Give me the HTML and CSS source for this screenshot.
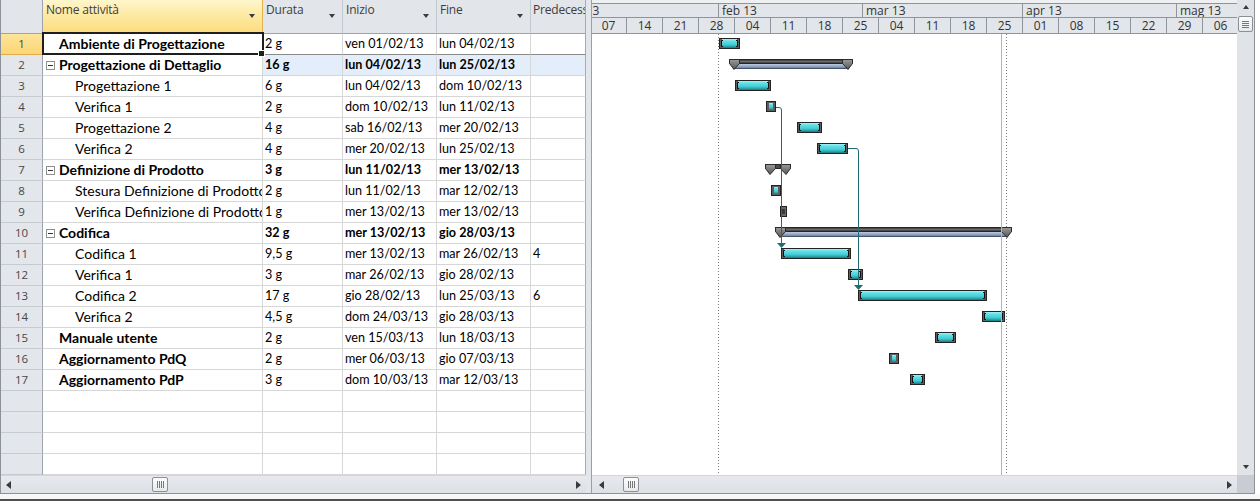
FILE: index.html
```html
<!DOCTYPE html>
<html lang="it">
<head>
<meta charset="utf-8">
<title>Gantt</title>
<link rel="stylesheet" href="styles.css">
</head>
<body>
<div class="app">
  <div class="main">
    <div class="sheet">
      <div class="thead">
        <div class="th corner-h"></div>
        <div class="th sel">Nome attività<i class="dd"></i></div>
        <div class="th">Durata<i class="dd"></i></div>
        <div class="th">Inizio<i class="dd"></i></div>
        <div class="th">Fine<i class="dd"></i></div>
        <div class="th last">Predecessori</div>
      </div>
      <div class="tbody">
        <div class="row cur"><div class="rn">1</div><div class="cell name l1 b selbox">Ambiente di Progettazione</div><div class="cell">2 g</div><div class="cell">ven 01/02/13</div><div class="cell">lun 04/02/13</div><div class="cell last"></div></div>
        <div class="row sum hl"><div class="rn">2</div><div class="cell name l0"><i class="tog"></i>Progettazione di Dettaglio</div><div class="cell">16 g</div><div class="cell">lun 04/02/13</div><div class="cell">lun 25/02/13</div><div class="cell last"></div></div>
        <div class="row"><div class="rn">3</div><div class="cell name l2">Progettazione 1</div><div class="cell">6 g</div><div class="cell">lun 04/02/13</div><div class="cell">dom 10/02/13</div><div class="cell last"></div></div>
        <div class="row"><div class="rn">4</div><div class="cell name l2">Verifica 1</div><div class="cell">2 g</div><div class="cell">dom 10/02/13</div><div class="cell">lun 11/02/13</div><div class="cell last"></div></div>
        <div class="row"><div class="rn">5</div><div class="cell name l2">Progettazione 2</div><div class="cell">4 g</div><div class="cell">sab 16/02/13</div><div class="cell">mer 20/02/13</div><div class="cell last"></div></div>
        <div class="row"><div class="rn">6</div><div class="cell name l2">Verifica 2</div><div class="cell">4 g</div><div class="cell">mer 20/02/13</div><div class="cell">lun 25/02/13</div><div class="cell last"></div></div>
        <div class="row sum"><div class="rn">7</div><div class="cell name l0"><i class="tog"></i>Definizione di Prodotto</div><div class="cell">3 g</div><div class="cell">lun 11/02/13</div><div class="cell">mer 13/02/13</div><div class="cell last"></div></div>
        <div class="row"><div class="rn">8</div><div class="cell name l2">Stesura Definizione di Prodotto</div><div class="cell">2 g</div><div class="cell">lun 11/02/13</div><div class="cell">mar 12/02/13</div><div class="cell last"></div></div>
        <div class="row"><div class="rn">9</div><div class="cell name l2">Verifica Definizione di Prodotto</div><div class="cell">1 g</div><div class="cell">mer 13/02/13</div><div class="cell">mer 13/02/13</div><div class="cell last"></div></div>
        <div class="row sum"><div class="rn">10</div><div class="cell name l0"><i class="tog"></i>Codifica</div><div class="cell">32 g</div><div class="cell">mer 13/02/13</div><div class="cell">gio 28/03/13</div><div class="cell last"></div></div>
        <div class="row"><div class="rn">11</div><div class="cell name l2">Codifica 1</div><div class="cell">9,5 g</div><div class="cell">mer 13/02/13</div><div class="cell">mar 26/02/13</div><div class="cell last">4</div></div>
        <div class="row"><div class="rn">12</div><div class="cell name l2">Verifica 1</div><div class="cell">3 g</div><div class="cell">mar 26/02/13</div><div class="cell">gio 28/02/13</div><div class="cell last"></div></div>
        <div class="row"><div class="rn">13</div><div class="cell name l2">Codifica 2</div><div class="cell">17 g</div><div class="cell">gio 28/02/13</div><div class="cell">lun 25/03/13</div><div class="cell last">6</div></div>
        <div class="row"><div class="rn">14</div><div class="cell name l2">Verifica 2</div><div class="cell">4,5 g</div><div class="cell">dom 24/03/13</div><div class="cell">gio 28/03/13</div><div class="cell last"></div></div>
        <div class="row"><div class="rn">15</div><div class="cell name l1 b">Manuale utente</div><div class="cell">2 g</div><div class="cell">ven 15/03/13</div><div class="cell">lun 18/03/13</div><div class="cell last"></div></div>
        <div class="row"><div class="rn">16</div><div class="cell name l1 b">Aggiornamento PdQ</div><div class="cell">2 g</div><div class="cell">mer 06/03/13</div><div class="cell">gio 07/03/13</div><div class="cell last"></div></div>
        <div class="row"><div class="rn">17</div><div class="cell name l1 b">Aggiornamento PdP</div><div class="cell">3 g</div><div class="cell">dom 10/03/13</div><div class="cell">mar 12/03/13</div><div class="cell last"></div></div>
        <div class="row"><div class="rn"></div><div class="cell"></div><div class="cell"></div><div class="cell"></div><div class="cell"></div><div class="cell last"></div></div>
        <div class="row"><div class="rn"></div><div class="cell"></div><div class="cell"></div><div class="cell"></div><div class="cell"></div><div class="cell last"></div></div>
        <div class="row"><div class="rn"></div><div class="cell"></div><div class="cell"></div><div class="cell"></div><div class="cell"></div><div class="cell last"></div></div>
        <div class="row"><div class="rn"></div><div class="cell"></div><div class="cell"></div><div class="cell"></div><div class="cell"></div><div class="cell last"></div></div>
      </div>
    </div>
    <div class="splitter"></div>
    <div class="gantt">
      <div class="tscale">
        <div class="tier t1">
          <div class="m m-gen">gen 13</div>
          <div class="m m-feb">feb 13</div>
          <div class="m m-mar">mar 13</div>
          <div class="m m-apr">apr 13</div>
          <div class="m m-mag">mag 13</div>
        </div>
        <div class="tier t2">
          <div class="w first">07</div><div class="w">14</div><div class="w">21</div><div class="w">28</div><div class="w">04</div><div class="w">11</div><div class="w">18</div><div class="w">25</div><div class="w">04</div><div class="w">11</div><div class="w">18</div><div class="w">25</div><div class="w">01</div><div class="w">08</div><div class="w">15</div><div class="w">22</div><div class="w">29</div><div class="w">06</div>
        </div>
      </div>
      <svg class="chart" width="645" height="441" viewBox="0 0 645 441">
        <defs>
          <linearGradient id="cy" x1="0" y1="0" x2="0" y2="1">
            <stop offset="0" stop-color="#a4f4f7"/>
            <stop offset="0.22" stop-color="#62e0e8"/>
            <stop offset="0.6" stop-color="#46cdd6"/>
            <stop offset="0.85" stop-color="#2a9fa7"/>
            <stop offset="1" stop-color="#1b767c"/>
          </linearGradient>
          <linearGradient id="bl" x1="0" y1="0" x2="0" y2="1">
            <stop offset="0" stop-color="#cdd8ea"/>
            <stop offset="0.45" stop-color="#9fb1cc"/>
            <stop offset="1" stop-color="#60738f"/>
          </linearGradient>
          <linearGradient id="tri" x1="0" y1="0" x2="0" y2="1">
            <stop offset="0" stop-color="#9a9a9a"/>
            <stop offset="1" stop-color="#555"/>
          </linearGradient>
        </defs>

        <line x1="126.5" y1="0" x2="126.5" y2="441" stroke="#7d7d7d" stroke-dasharray="1 2"/>
        <line x1="414.5" y1="0" x2="414.5" y2="441" stroke="#7d7d7d" stroke-dasharray="1 2"/>

        <!-- summary 2 -->
        <g transform="translate(137 25)">
          <rect x="4" y="4" width="116" height="6" fill="url(#bl)"/>
          <rect x="4" y="9" width="116" height="1" fill="#43536c"/>
          <rect width="124" height="5" fill="#262626"/>
          <rect x="1" y="1" width="122" height="3" fill="#4a4a4a"/>
          <rect x="1" y="2" width="122" height="1" fill="#6c6c6c"/>
          <path d="M0.5 0.5H10.5V4.5L5 10.5L0.5 4.5Z" fill="url(#tri)" stroke="#2b2b2b"/>
          <path d="M113.5 0.5H123.5V4.5L119 10.5L113.5 4.5Z" fill="url(#tri)" stroke="#2b2b2b"/>
        </g>
        <!-- summary 7 -->
        <g transform="translate(173 130)">
          <rect width="26" height="5" fill="#262626"/>
          <rect x="1" y="1" width="24" height="3" fill="#4a4a4a"/>
          <path d="M0.5 0.5H10.5V4.5L5 10.5L0.5 4.5Z" fill="url(#tri)" stroke="#2b2b2b"/>
          <path d="M15.5 0.5H25.5V4.5L21 10.5L15.5 4.5Z" fill="url(#tri)" stroke="#2b2b2b"/>
        </g>
        <!-- summary 10 -->
        <g transform="translate(183 193)">
          <rect x="4" y="4" width="229" height="6" fill="url(#bl)"/>
          <rect x="4" y="9" width="229" height="1" fill="#43536c"/>
          <rect width="237" height="5" fill="#262626"/>
          <rect x="1" y="1" width="235" height="3" fill="#4a4a4a"/>
          <rect x="1" y="2" width="235" height="1" fill="#6c6c6c"/>
          <path d="M0.5 0.5H10.5V4.5L5 10.5L0.5 4.5Z" fill="url(#tri)" stroke="#2b2b2b"/>
          <path d="M226.5 0.5H236.5V4.5L232 10.5L226.5 4.5Z" fill="url(#tri)" stroke="#2b2b2b"/>
        </g>

        <g class="tasks">
          <g transform="translate(127 4)"><rect width="21" height="11" fill="#222"/><rect x="1" y="1" width="19" height="9" fill="#5e5e5e"/><rect x="3" y="1" width="15" height="9" fill="url(#cy)"/><path d="M4 2.5H2.5v6H4M17 2.5h1.5v6h-1.5" stroke="#111" fill="none"/></g>
          <g transform="translate(143 46)"><rect width="36" height="11" fill="#222"/><rect x="1" y="1" width="34" height="9" fill="#5e5e5e"/><rect x="3" y="1" width="30" height="9" fill="url(#cy)"/><path d="M4 2.5H2.5v6H4M32 2.5h1.5v6h-1.5" stroke="#111" fill="none"/></g>
          <g transform="translate(174 67)"><rect width="10" height="11" fill="#222"/><rect x="1" y="1" width="8" height="9" fill="#5e5e5e"/><rect x="3" y="2" width="4" height="7" fill="url(#cy)"/></g>
          <g transform="translate(205 88)"><rect width="25" height="11" fill="#222"/><rect x="1" y="1" width="23" height="9" fill="#5e5e5e"/><rect x="3" y="1" width="19" height="9" fill="url(#cy)"/><path d="M4 2.5H2.5v6H4M21 2.5h1.5v6h-1.5" stroke="#111" fill="none"/></g>
          <g transform="translate(225 109)"><rect width="31" height="11" fill="#222"/><rect x="1" y="1" width="29" height="9" fill="#5e5e5e"/><rect x="3" y="1" width="25" height="9" fill="url(#cy)"/><path d="M4 2.5H2.5v6H4M27 2.5h1.5v6h-1.5" stroke="#111" fill="none"/></g>
          <g transform="translate(179 151)"><rect width="10" height="11" fill="#222"/><rect x="1" y="1" width="8" height="9" fill="#5e5e5e"/><rect x="3" y="2" width="4" height="7" fill="url(#cy)"/></g>
          <g transform="translate(188 172)"><rect width="7" height="11" fill="#222"/><rect x="1" y="1" width="5" height="9" fill="#6a6a6a"/><rect x="2" y="3" width="3" height="5" fill="#3a3a3a"/></g>
          <g transform="translate(189 214)"><rect width="70" height="11" fill="#222"/><rect x="1" y="1" width="68" height="9" fill="#5e5e5e"/><rect x="3" y="1" width="64" height="9" fill="url(#cy)"/><path d="M4 2.5H2.5v6H4M66 2.5h1.5v6h-1.5" stroke="#111" fill="none"/></g>
          <g transform="translate(256 235)"><rect width="15" height="11" fill="#222"/><rect x="1" y="1" width="13" height="9" fill="#5e5e5e"/><rect x="3" y="1" width="9" height="9" fill="url(#cy)"/><path d="M4 2.5H2.5v6H4M11 2.5h1.5v6h-1.5" stroke="#111" fill="none"/></g>
          <g transform="translate(266 256)"><rect width="129" height="11" fill="#222"/><rect x="1" y="1" width="127" height="9" fill="#5e5e5e"/><rect x="3" y="1" width="123" height="9" fill="url(#cy)"/><path d="M4 2.5H2.5v6H4M125 2.5h1.5v6h-1.5" stroke="#111" fill="none"/></g>
          <g transform="translate(390 277)"><rect width="23" height="11" fill="#222"/><rect x="1" y="1" width="21" height="9" fill="#5e5e5e"/><rect x="3" y="1" width="17" height="9" fill="url(#cy)"/><path d="M4 2.5H2.5v6H4M19 2.5h1.5v6h-1.5" stroke="#111" fill="none"/></g>
          <g transform="translate(343 298)"><rect width="21" height="11" fill="#222"/><rect x="1" y="1" width="19" height="9" fill="#5e5e5e"/><rect x="3" y="1" width="15" height="9" fill="url(#cy)"/><path d="M4 2.5H2.5v6H4M17 2.5h1.5v6h-1.5" stroke="#111" fill="none"/></g>
          <g transform="translate(297 319)"><rect width="10" height="11" fill="#222"/><rect x="1" y="1" width="8" height="9" fill="#5e5e5e"/><rect x="3" y="2" width="4" height="7" fill="url(#cy)"/></g>
          <g transform="translate(318 340)"><rect width="15" height="11" fill="#222"/><rect x="1" y="1" width="13" height="9" fill="#5e5e5e"/><rect x="3" y="1" width="9" height="9" fill="url(#cy)"/><path d="M4 2.5H2.5v6H4M11 2.5h1.5v6h-1.5" stroke="#111" fill="none"/></g>
        </g>

        <g class="links" stroke="#1f6d73" fill="none">
          <path d="M184 73.5H187Q189.5 73.5 189.5 76V209"/>
          <path d="M256 114.5H264Q266.5 114.5 266.5 117V251"/>
        </g>
        <polygon points="185,209 194,209 189.5,214" fill="#1f6d73"/>
        <polygon points="262,251 271,251 266.5,256" fill="#1f6d73"/>

        <line x1="409.5" y1="0" x2="409.5" y2="441" stroke="#f2a565"/>
      </svg>
    </div>
    <div class="vscroll">
      <i class="va up"></i>
      <span class="vthumb"><i class="grip-h"></i></span>
      <i class="va down"></i>
    </div>
  </div>
  <div class="hbar">
    <div class="hs hs-left"><i class="ha l"></i><span class="hthumb t-left"><i class="grip-v"></i></span><i class="ha r"></i></div>
    <div class="splitter"></div>
    <div class="hs hs-right"><i class="ha l"></i><span class="hthumb t-right"><i class="grip-v"></i></span><i class="ha r"></i></div>
    <div class="corner"></div>
  </div>
</div>
<div class="footer"></div>
</body>
</html>
```
FILE: styles.css
```css
html, body {
  margin: 0;
  padding: 0;
}
body {
  width: 1260px;
  height: 501px;
  overflow: hidden;
  background: #fff;
  font-family: "Open Sans", "Noto Sans", sans-serif;
}

.app {
  width: 1255px;
  height: 494px;
  box-sizing: border-box;
  border-left: 1px solid #8d9198;
  border-right: 1px solid #8d9198;
  border-bottom: 1px solid #8d9198;
  display: flex;
  flex-direction: column;
}

.main {
  display: flex;
  height: 475px;
}

/* ---------- sheet ---------- */
.sheet {
  width: 585px;
  display: flex;
  flex-direction: column;
}
.thead,
.row {
  display: grid;
  grid-template-columns: 42px 220px 80px 94px 94px 55px;
}
.thead {
  height: 34px;
}
.th {
  position: relative;
  box-sizing: border-box;
  background: #e2e5e9;
  border-right: 1px solid #c3c8ce;
  border-bottom: 1px solid #9ea4ac;
  padding: 2px 3px;
  font-size: 12px;
  letter-spacing: -0.2px;
  line-height: 15px;
  color: #3d3d3d;
  white-space: nowrap;
  overflow: hidden;
}
.th.corner-h {
  border-right-color: #9ea4ac;
}
.th.sel {
  background: linear-gradient(#fef6cc 0%, #fdeaa4 45%, #fcdc7c 100%);
  border-right: 1px solid #e9b04e;
  border-bottom: 1px solid #e9b04e;
}
.th.last {
  border-right-color: #a6abb2;
  padding-left: 2px;
}
.dd {
  position: absolute;
  right: 7px;
  top: 14px;
  width: 0;
  height: 0;
  border-left: 3.5px solid transparent;
  border-right: 3.5px solid transparent;
  border-top: 4px solid #3c3c3c;
}

.row {
  height: 21px;
}
.rn {
  box-sizing: border-box;
  background: #e3e6ea;
  border-right: 1px solid #9ea4ac;
  border-bottom: 1px solid #c6cbd1;
  text-align: center;
  font-size: 11.5px;
  line-height: 20px;
  color: #474747;
}
.cell {
  position: relative;
  box-sizing: border-box;
  border-right: 1px solid #d7d7d7;
  border-bottom: 1px solid #d7d7d7;
  padding-left: 2px;
  font-family: Lato, "Open Sans", sans-serif;
  font-size: 12.6px;
  line-height: 20px;
  color: #000;
  white-space: nowrap;
  overflow: hidden;
}
.cell.name {
  font-size: 14px;
}
.cell.last {
  border-right-color: #a6abb2;
}
.cell.l0 { padding-left: 3px; }
.cell.l1 { padding-left: 16px; }
.cell.l2 { padding-left: 32px; }
.b,
.row.sum .cell {
  font-weight: 700;
}
.row.hl .cell:not(.name) {
  background: #e4eefa;
}
.row.cur .rn {
  background: linear-gradient(#fde49a, #fbd676);
  border-bottom-color: #e2ab4c;
  border-right-color: #e2ab4c;
}
.row.cur .cell {
  border-bottom-color: #8a8a8a;
}
.tog {
  display: inline-block;
  box-sizing: border-box;
  width: 9px;
  height: 9px;
  margin-right: 4px;
  vertical-align: 0;
  border: 1px solid #8f8f8f;
  background: #fff linear-gradient(#333, #333) center / 5px 1px no-repeat;
}
.cell.selbox {
  overflow: visible;
  z-index: 2;
}
.cell.selbox::after {
  content: "";
  position: absolute;
  left: -1px;
  top: -2px;
  width: 222px;
  height: 23px;
  box-sizing: border-box;
  border: 2px solid #1e1e1e;
}
.cell.selbox::before {
  content: "";
  position: absolute;
  left: 215px;
  top: 16px;
  width: 5px;
  height: 5px;
  background: #1e1e1e;
  border: 1px solid #fff;
  z-index: 3;
}

/* ---------- splitter ---------- */
.splitter {
  width: 6px;
  flex: none;
  box-sizing: border-box;
  background: #e3e6ea;
  border-right: 1px solid #9aa0a8;
}

/* ---------- gantt ---------- */
.gantt {
  width: 645px;
  display: flex;
  flex-direction: column;
  overflow: hidden;
}
.tscale {
  height: 34px;
  box-sizing: border-box;
  padding-top: 3px;
  background: #eef0f2;
  font-size: 12px;
  color: #333;
}
.tier {
  display: flex;
  background: #e2e5e9;
  overflow: hidden;
  white-space: nowrap;
}
.t1 {
  height: 15px;
  box-sizing: border-box;
  border-top: 1px solid #8e949b;
  border-bottom: 1px solid #8e949b;
  line-height: 13px;
}
.t2 {
  height: 16px;
  box-sizing: border-box;
  border-bottom: 1px solid #8e949b;
  line-height: 15px;
}
.m {
  flex: none;
  box-sizing: border-box;
  border-right: 1px solid #8e949b;
  padding-left: 3px;
}
.m-gen { width: 160px; margin-left: -33px; }
.m-feb { width: 144px; }
.m-mar { width: 160px; }
.m-apr { width: 154px; }
.m-mag { width: 160px; }
.w {
  flex: none;
  width: 36px;
  box-sizing: border-box;
  border-right: 1px solid #8e949b;
  text-align: center;
}
.w.first { margin-left: -1px; }
.chart {
  display: block;
  background: #fff;
}

/* ---------- scrollbars ---------- */
.vscroll {
  width: 17px;
  flex: none;
  display: flex;
  flex-direction: column;
  align-items: center;
  background: #e0e3e7;
}
.va {
  width: 0;
  height: 0;
  border-left: 3.5px solid transparent;
  border-right: 3.5px solid transparent;
}
.va.up {
  margin-top: 5px;
  border-bottom: 4px solid #3a3a3a;
}
.va.down {
  margin-top: auto;
  margin-bottom: 6px;
  border-top: 4px solid #3a3a3a;
}
.vthumb,
.hthumb {
  box-sizing: border-box;
  width: 15px;
  height: 15px;
  border: 1px solid #8a9097;
  border-radius: 2px;
  background: linear-gradient(#fdfdfd, #e6e9ec);
  display: flex;
  align-items: center;
  justify-content: center;
}
.vthumb {
  margin-top: 7px;
  height: 16px;
}
.grip-h {
  width: 7px;
  height: 7px;
  background: repeating-linear-gradient(#777 0 1px, transparent 1px 2px);
}
.grip-v {
  width: 7px;
  height: 7px;
  background: repeating-linear-gradient(90deg, #777 0 1px, transparent 1px 2px);
}

.hbar {
  display: flex;
  height: 18px;
}
.hs {
  display: flex;
  align-items: center;
  box-sizing: border-box;
  background: linear-gradient(#e7e9ed, #dde1e6);
  border-top: 1px solid #d3d7dc;
}
.hs-left {
  width: 585px;
  padding: 0 5px;
}
.hs-right {
  width: 645px;
  padding: 0 5px 0 7px;
}
.hbar .splitter {
  background: #e3e6ea;
}
.ha {
  width: 0;
  height: 0;
  border-top: 4px solid transparent;
  border-bottom: 4px solid transparent;
}
.ha.l { border-right: 5px solid #3a3a3a; }
.ha.r { border-left: 5px solid #3a3a3a; margin-left: auto; }
.hthumb {
  width: 16px;
}
.t-left { margin-left: 141px; }
.t-right { margin-left: 19px; }
.corner {
  width: 17px;
  background: #c9cdd3;
}

.footer {
  height: 7px;
  box-sizing: border-box;
  background: #f7f7f7;
  border-bottom: 2px solid #4e4e4e;
}
```
